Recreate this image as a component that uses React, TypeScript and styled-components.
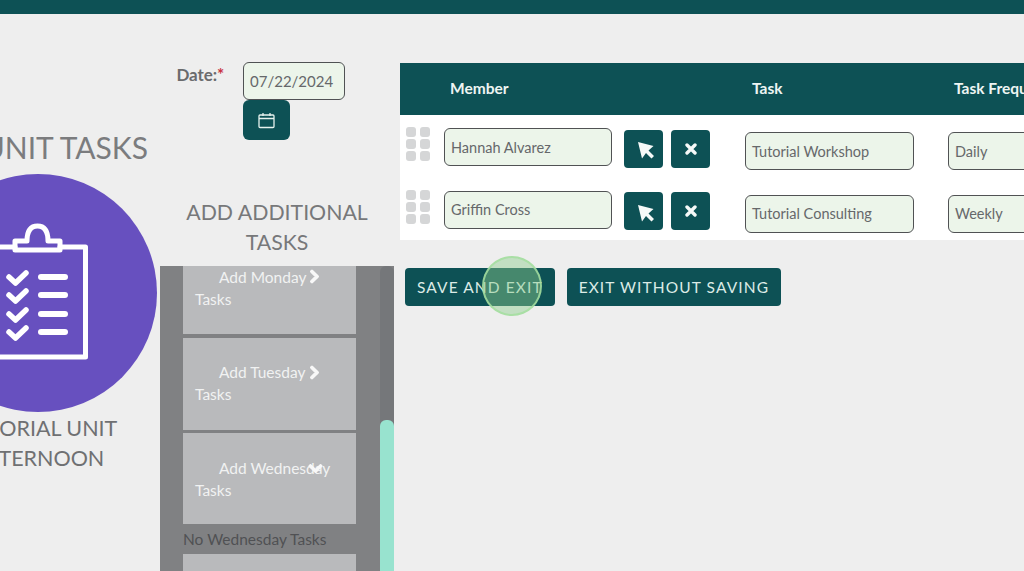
import styled, { createGlobalStyle } from "styled-components";
import { FaChevronDown, FaChevronRight } from "react-icons/fa";

const GlobalStyle = createGlobalStyle`
  html, body {
    margin: 0;
    padding: 0;
    background: #eeeeee;
  }

  * {
    box-sizing: border-box;
  }
`;

const Page = styled.div`
  width: 1024px;
  height: 571px;
  overflow: hidden;
  background: #eeeeee;
  font-family: Lato, "Open Sans", sans-serif;
  color: #6f7072;
`;

const TopBar = styled.div`
  height: 14px;
  background: #0d5155;
`;

const Main = styled.div`
  display: flex;
  align-items: flex-start;
`;

const UnitColumn = styled.div`
  flex: none;
  width: 238px;
  margin-left: -81px;
  padding-top: 117px;
  display: flex;
  flex-direction: column;
`;

const UnitHeading = styled.h1`
  margin: 0 9px 0 0;
  font-size: 30px;
  line-height: 32px;
  font-weight: 400;
  text-align: right;
  white-space: nowrap;
  color: #7b7c7e;
`;

const UnitBadge = styled.div`
  width: 238px;
  height: 238px;
  margin-top: 11px;
  border-radius: 50%;
  background: #6750bf;
  display: flex;
  align-items: center;
  justify-content: center;
`;

const UnitName = styled.div`
  margin-top: 1px;
  font-size: 21.5px;
  line-height: 30px;
  text-align: center;
  white-space: nowrap;
  color: #6f7072;
`;

const TasksColumn = styled.div`
  flex: none;
  width: 234px;
  margin-left: 3px;
  display: flex;
  flex-direction: column;
`;

const DateRow = styled.div`
  display: flex;
  align-items: flex-start;
  height: 183px;
  padding: 48px 0 0 16.5px;
`;

const DateLabel = styled.label`
  width: 66.5px;
  padding-top: 2px;
  font-size: 17px;
  font-weight: 700;
  letter-spacing: -0.1px;
  color: #6a6b6d;
`;

const Required = styled.span`
  color: #c9323f;
`;

const DatePicker = styled.div`
  display: flex;
  flex-direction: column;
  align-items: flex-start;
`;

const Field = styled.div<{ $width: number; $size?: number }>`
  width: ${(p) => p.$width}px;
  height: 38px;
  padding: 0 6px;
  display: flex;
  align-items: center;
  white-space: nowrap;
  overflow: hidden;
  font-size: ${(p) => p.$size ?? 14.5}px;
  color: #66686a;
  background: #ecf5ea;
  border: 1.5px solid #505254;
  border-radius: 6px;
`;

const CalendarButton = styled.button`
  width: 47px;
  height: 40px;
  padding: 0;
  display: flex;
  align-items: center;
  justify-content: center;
  border: none;
  border-radius: 6px;
  background: #0d5155;
  color: #e6f2ee;
`;

const AddHeading = styled.h2`
  margin: 0;
  height: 69px;
  padding: 0 14px;
  font-size: 21.3px;
  line-height: 30px;
  font-weight: 400;
  text-align: center;
  color: #77787a;
`;

const DayPanel = styled.div`
  height: 305px;
  overflow: hidden;
  display: flex;
  background: #808183;
`;

const DayList = styled.div`
  flex: none;
  width: 220px;
  padding-left: 23px;
  display: flex;
  flex-direction: column;
`;

const DayCard = styled.div<{ $height: number; $gap: number }>`
  position: relative;
  flex: none;
  width: 173px;
  height: ${(p) => p.$height}px;
  margin-bottom: ${(p) => p.$gap}px;
  padding: 0 12px;
  background: #b9babc;
  color: #f1f2f2;
  font-size: 15.5px;
  line-height: 22px;
`;

const DayCardText = styled.div<{ $top: number }>`
  padding-top: ${(p) => p.$top}px;
  text-indent: 24px;
`;

const DayChevron = styled.span<{ $left: number; $top: number }>`
  position: absolute;
  left: ${(p) => p.$left}px;
  top: ${(p) => p.$top}px;
  display: flex;
  font-size: 15px;
  color: #f8f8f8;

  svg path {
    stroke: #f8f8f8;
    stroke-width: 40px;
  }
`;

const NoTasks = styled.div`
  height: 30px;
  font-size: 15.5px;
  line-height: 30px;
  white-space: nowrap;
  color: #505154;
`;

const ScrollTrack = styled.div`
  flex: none;
  width: 14px;
  margin-left: auto;
  padding-top: 154px;
  background: #75777a;
  border-radius: 6px 6px 0 0;
`;

const ScrollThumb = styled.div`
  height: 100%;
  background: #98e3cf;
  border-radius: 6px 6px 0 0;
`;

const MembersColumn = styled.div`
  flex: none;
  width: 800px;
  margin-left: 6px;
  padding-top: 49px;
`;

const Table = styled.div`
  background: #ffffff;
`;

const HeaderRow = styled.div`
  display: grid;
  grid-template-columns: 50px 302px 202px 1fr;
  align-items: center;
  height: 52px;
  padding-bottom: 2px;
  background: #0d5155;
  color: #eef5f3;
  font-size: 15.5px;
  font-weight: 700;
  white-space: nowrap;
`;

const Row = styled.div`
  display: grid;
  grid-template-columns: 44px 301px 203px 1fr;
  height: 62.5px;
`;

const Cell = styled.div<{ $top: number }>`
  display: flex;
  align-items: flex-start;
  padding-top: ${(p) => p.$top}px;
`;

const Handle = styled.div`
  display: grid;
  grid-template-columns: repeat(2, 10px);
  grid-auto-rows: 10px;
  gap: 2px 4px;
  margin: 12px 0 0 6px;
`;

const HandleDot = styled.span`
  background: #d5d6d7;
  border-radius: 3px;
`;

const MemberActions = styled.div`
  display: flex;
  gap: 8px;
  margin: 1.5px 0 0 12px;
`;

const ActionButton = styled.button`
  width: 39px;
  height: 38px;
  padding: 0;
  display: flex;
  align-items: center;
  justify-content: center;
  border: none;
  border-radius: 4px;
  background: #0d5155;
  color: #f4f8f7;
`;

const PointerSvg = styled.svg`
  margin: 4px 0 0 4px;
`;

const Footer = styled.div`
  position: relative;
  display: flex;
  gap: 12px;
  margin: 28px 0 0 5px;
`;

const FooterButton = styled.button`
  height: 38px;
  padding: 0 12px;
  border: none;
  border-radius: 4px;
  background: #0d5155;
  color: #dcebe6;
  font-family: inherit;
  font-size: 15.5px;
  letter-spacing: 1.1px;
  white-space: nowrap;
`;

const ClickMarker = styled.div`
  position: absolute;
  left: 77px;
  top: -12px;
  width: 60px;
  height: 60px;
  border-radius: 50%;
  background: rgba(140, 205, 140, 0.45);
  border: 2px solid rgba(165, 222, 160, 0.85);
`;

const dots = [0, 1, 2, 3, 4, 5];

const members = [
  { name: "Hannah Alvarez", task: "Tutorial Workshop", frequency: "Daily" },
  { name: "Griffin Cross", task: "Tutorial Consulting", frequency: "Weekly" },
];

function ClipboardIcon() {
  return (
    <svg width="104" height="142" viewBox="0 0 104 142" fill="none" stroke="#ffffff" strokeWidth="5" strokeLinecap="round" strokeLinejoin="round">
      <path d="M29 25 H3 V135 H99.5 V25 H74" />
      <path d="M29 19 H41 C41 10 44 4 51.5 4 C59 4 62 10 62 19 H74 V28 H29 Z" />
      {[55, 73, 92, 110].map((y) => (
        <g key={y}>
          <path d="M23 0 L29.5 6 L40 -4" transform={`translate(0 ${y})`} strokeWidth="5.5" />
          <line x1="55" y1={y} x2="79" y2={y} strokeWidth="6" />
        </g>
      ))}
    </svg>
  );
}

function CalendarIcon() {
  return (
    <svg width="17" height="17" viewBox="0 0 17 17" fill="none" stroke="currentColor" strokeWidth="1.3">
      <rect x="1" y="3" width="15" height="12.5" rx="1" />
      <path d="M1 6.5 H16 M5 1 V4 M12 1 V4" />
    </svg>
  );
}

function PointerIcon() {
  return (
    <PointerSvg width="16" height="17" viewBox="0 0 16 17" fill="#f6f9f8">
      <path d="M0 0 L15.5 4 L10.5 8.5 L16 14 L13.5 16.5 L8 11 L4 16.5 Z" />
    </PointerSvg>
  );
}

function RemoveIcon() {
  return (
    <svg width="12" height="12" viewBox="0 0 12 12" stroke="#f6f9f8" strokeWidth="3.4" strokeLinecap="round">
      <path d="M2 2 L10 10 M10 2 L2 10" />
    </svg>
  );
}

function GripHandle() {
  return (
    <Handle>
      {dots.map((dot) => (
        <HandleDot key={dot} />
      ))}
    </Handle>
  );
}

export default function App() {
  return (
    <Page>
      <GlobalStyle />
      <TopBar />
      <Main>
        <UnitColumn>
          <UnitHeading>UNIT TASKS</UnitHeading>
          <UnitBadge>
            <ClipboardIcon />
          </UnitBadge>
          <UnitName>
            TUTORIAL UNIT
            <br />
            AFTERNOON
          </UnitName>
        </UnitColumn>

        <TasksColumn>
          <DateRow>
            <DateLabel>
              Date:<Required>*</Required>
            </DateLabel>
            <DatePicker>
              <Field $width={102} $size={15}>
                07/22/2024
              </Field>
              <CalendarButton aria-label="Pick date">
                <CalendarIcon />
              </CalendarButton>
            </DatePicker>
          </DateRow>
          <AddHeading>ADD ADDITIONAL TASKS</AddHeading>
          <DayPanel>
            <DayList>
              <DayCard $height={68} $gap={4}>
                <DayCardText $top={0}>Add Monday Tasks</DayCardText>
                <DayChevron $left={124} $top={3}>
                  <FaChevronRight />
                </DayChevron>
              </DayCard>
              <DayCard $height={92} $gap={3}>
                <DayCardText $top={23}>Add Tuesday Tasks</DayCardText>
                <DayChevron $left={124} $top={27}>
                  <FaChevronRight />
                </DayChevron>
              </DayCard>
              <DayCard $height={91} $gap={0}>
                <DayCardText $top={24}>Add Wednesday Tasks</DayCardText>
                <DayChevron $left={125} $top={28}>
                  <FaChevronDown />
                </DayChevron>
              </DayCard>
              <NoTasks>No Wednesday Tasks</NoTasks>
              <DayCard $height={60} $gap={0} />
            </DayList>
            <ScrollTrack>
              <ScrollThumb />
            </ScrollTrack>
          </DayPanel>
        </TasksColumn>

        <MembersColumn>
          <Table>
            <HeaderRow>
              <span />
              <span>Member</span>
              <span>Task</span>
              <span>Task Frequency</span>
            </HeaderRow>
            {members.map((member) => (
              <Row key={member.name}>
                <Cell $top={0}>
                  <GripHandle />
                </Cell>
                <Cell $top={13}>
                  <Field $width={168}>{member.name}</Field>
                  <MemberActions>
                    <ActionButton aria-label="Select member">
                      <PointerIcon />
                    </ActionButton>
                    <ActionButton aria-label="Remove member">
                      <RemoveIcon />
                    </ActionButton>
                  </MemberActions>
                </Cell>
                <Cell $top={17}>
                  <Field $width={169}>{member.task}</Field>
                </Cell>
                <Cell $top={17}>
                  <Field $width={169}>{member.frequency}</Field>
                </Cell>
              </Row>
            ))}
          </Table>
          <Footer>
            <FooterButton>SAVE AND EXIT</FooterButton>
            <FooterButton>EXIT WITHOUT SAVING</FooterButton>
            <ClickMarker />
          </Footer>
        </MembersColumn>
      </Main>
    </Page>
  );
}
